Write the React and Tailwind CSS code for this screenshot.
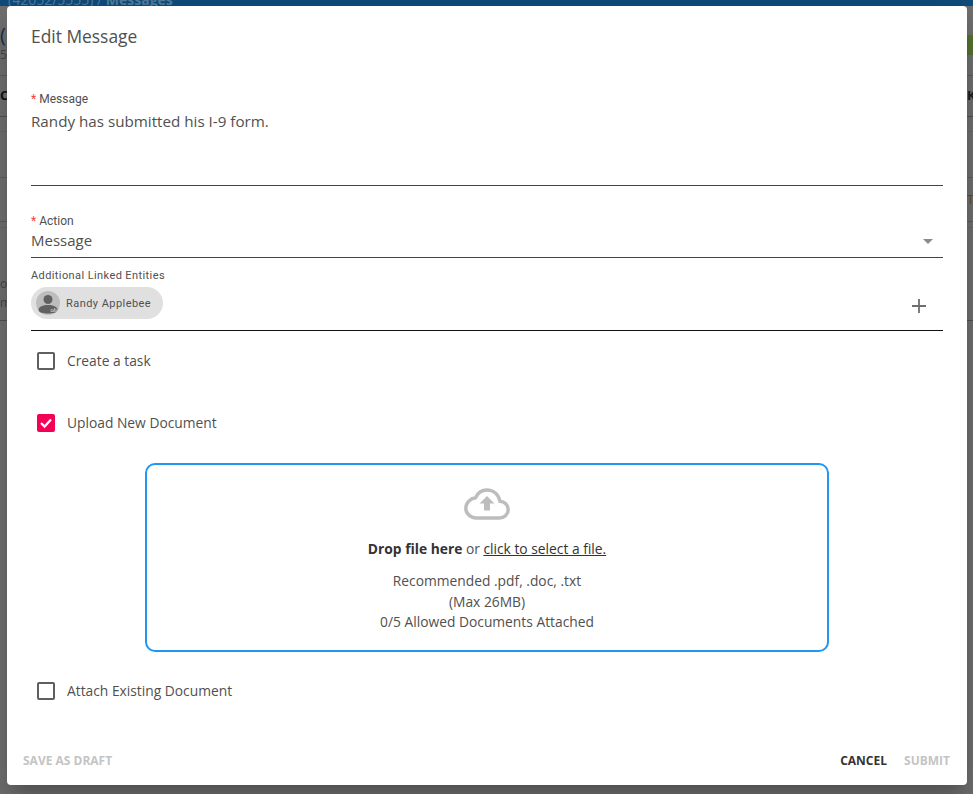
function Box({ checked }) {
  return checked ? (
    <span className="w-[18px] h-[18px] rounded-[2px] bg-[#f50057] flex items-center justify-center shrink-0">
      <svg width="14" height="14" viewBox="0 0 14 14" fill="none"><path d="M2 7 L5.6 10.6 L12 3.6" stroke="#fff" strokeWidth="2.2" /></svg>
    </span>
  ) : (
    <span className="w-[18px] h-[18px] rounded-[2px] border-2 border-[#5f5f5f] shrink-0" />
  );
}
function Check({ label, checked, className }) {
  return (
    <div className={"flex items-center h-5 pl-[6px] " + className}>
      <Box checked={checked} />
      <span className="ml-[12px] text-[13.8px] text-[#505050]">{label}</span>
    </div>
  );
}
function Req({ children }) {
  return (
    <div className="text-[12px] leading-[14px] text-[#505050] font-['Roboto',sans-serif]">
      <span className="text-[#f44336] mr-[3px]">*</span>{children}
    </div>
  );
}
export default function App() {
  return (
    <div className="relative h-[794px] w-[973px] overflow-hidden bg-[#6e6e6e] font-['Open_Sans',sans-serif]">
      <div className="h-[6px] bg-[#0f4a78] text-[14px] leading-[0px] text-[#4f7a9a] pl-[8px]">(42052/5555) / <b>Messages</b></div>
      <div className="h-[70px] border-b border-[#5c5c5c] flex justify-between text-[#16304a]">
        <div className="pt-[16px] text-[20px] leading-[26px]">(<div className="text-[12px] leading-[14px] text-[#444]">55</div></div>
        <span className="w-[6px] h-[20px] mt-[29px] bg-[#567030]" />
      </div>
      <div className="h-[41px] flex justify-between items-center text-[13px] text-[#111] font-bold border-b border-[#4f4f4f]"><span>C</span><span className="w-[6px] text-[#1c1c1c]">K</span></div>
      <div className="h-[15px] border-b border-[#666]" />
      <div className="h-[46px] border-b border-[#5c5c5c]" />
      <div className="h-[44px] border-b border-[#5a5a5a] flex justify-end items-center text-[13px] text-[#5c4a2a]"><span className="w-[6px]">T</span></div>
      <div className="h-[6px] border-b border-[#666]" />
      <div className="h-[93px] border-b border-[#4f4f4f] pt-[46px] text-[12px] leading-[19px] text-[#444]">o<br />m</div>
      <div className="absolute left-[7px] top-[6px] w-[960px] h-[779px] rounded-[4px] bg-white shadow-[0_11px_15px_-7px_rgba(0,0,0,0.2),0_24px_38px_3px_rgba(0,0,0,0.14)] px-[24px] flex flex-col">
        <h2 className="mt-[19px] text-[17.4px] leading-[22px] text-[#505050]">Edit Message</h2>
        <div className="mt-[45px]"><Req>Message</Req></div>
        <div className="h-[80px] border-b border-[#444] pt-[5px] text-[15.2px] leading-[20px] text-[#505050] w-[912px]">Randy has submitted his I-9 form.</div>
        <div className="mt-[28px]"><Req>Action</Req></div>
        <div className="h-[30px] border-b border-[#444] pt-[2px] flex justify-between text-[15px] leading-[20px] text-[#505050] w-[912px]">
          <span>Message</span>
          <svg className="mt-[9px] mr-[10px]" width="10" height="5" viewBox="0 0 10 5"><path d="M0 0 H10 L5 5 Z" fill="#8a8a8a" /></svg>
        </div>
        <div className="mt-[11px] text-[11px] leading-[14px] tracking-[0.4px] text-[#505050] font-['Roboto',sans-serif]">Additional Linked Entities</div>
        <div className="h-[48px] border-b border-[#111] w-[912px] flex justify-between">
          <div className="mt-[4px] h-[32px] w-[132px] rounded-full bg-[#e0e0e0] flex items-center pl-[5px]">
            <svg width="24" height="24" viewBox="0 0 24 24" className="shrink-0">
              <circle cx="12" cy="12" r="12" fill="#bdbdbd" />
              <circle cx="12" cy="8.5" r="4.5" fill="#616161" />
              <path d="M2.5 19 C2.5 15.5 7 14 12 14 C17 14 21.5 15.5 21.5 19 C21.5 21.5 17 22.5 12 22.5 C7 22.5 2.5 21.5 2.5 19Z" fill="#616161" />
              <path d="M15 18.8H17.5V20.5H15ZM18.6 17V20.5H20.6V18.8H18.6" stroke="#cfcfcf" strokeWidth="0.7" fill="none" />
            </svg>
            <span className="ml-[6px] pt-[3px] text-[11px] text-[#505050] font-['Roboto',sans-serif] tracking-[0.45px]">Randy Applebee</span>
          </div>
          <svg className="mt-[16px] mr-[17px]" width="14" height="14" viewBox="0 0 14 14"><path d="M7 0V14M0 7H14" stroke="#6f6f6f" strokeWidth="1.8" /></svg>
        </div>
        <Check className="mt-[20px]" label="Create a task" />
        <Check className="mt-[42px]" label="Upload New Document" checked />
        <div className="mt-[30px] mx-auto w-[684px] h-[189px] rounded-[10px] border-2 border-[#2196f3] flex flex-col items-center text-[13.8px] text-[#505050]">
          <svg className="mt-[23px]" width="46" height="32" viewBox="0 0 46 32" fill="none">
            <path d="M12 30 H35.5 C40.5 30 44.2 26 44.2 21.5 C44.2 17 40.5 13.5 36 13.2 C34.5 6.5 29.5 2 23 2 C17.5 2 13.6 5 11.6 9.7 C6 10.5 1.8 15 1.8 20.2 C1.8 25.5 6.5 30 12 30 Z" stroke="#bdbdbd" strokeWidth="3.4" />
            <path d="M23 8 L30.5 15.5 H26 V22.5 H20 V15.5 H15.5 Z" fill="#bdbdbd" />
          </svg>
          <div className="mt-[19px] leading-[20px]"><b className="text-[#333]">Drop file here</b> or <span className="underline text-[#333]">click to select a file.</span></div>
          <div className="mt-[12px] leading-[20.5px] text-center">Recommended .pdf, .doc, .txt<br />(Max 26MB)<br />0/5 Allowed Documents Attached</div>
        </div>
        <Check className="mt-[29px]" label="Attach Existing Document" />
        <div className="mt-auto mb-[16px] -mx-[8px] flex justify-between text-[12px] font-bold leading-[16px]">
          <span className="text-[#c4c4c4]">SAVE AS DRAFT</span>
          <span className="flex gap-[17px] mr-[1px]"><span className="text-[#333]">CANCEL</span><span className="text-[#c4c4c4]">SUBMIT</span></span>
        </div>
      </div>
    </div>
  );
}
